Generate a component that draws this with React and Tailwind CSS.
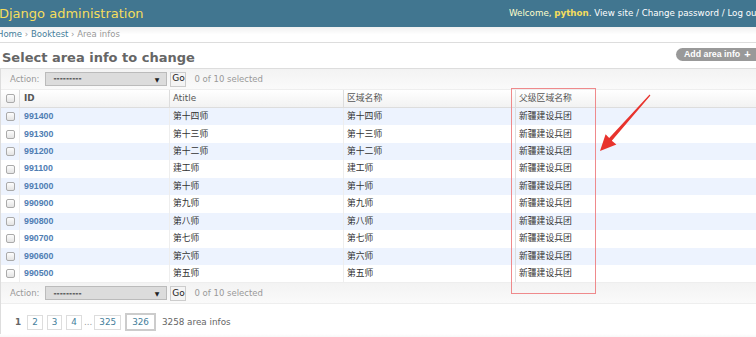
import React from 'react';

// Django admin change list for "area info", with a red highlight box and arrow on top.

const rows = [
  ['991400', '第十四师', '第十四师'],
  ['991300', '第十三师', '第十三师'],
  ['991200', '第十二师', '第十二师'],
  ['991100', '建工师', '建工师'],
  ['991000', '第十师', '第十师'],
  ['990900', '第九师', '第九师'],
  ['990800', '第八师', '第八师'],
  ['990700', '第七师', '第七师'],
  ['990600', '第六师', '第六师'],
  ['990500', '第五师', '第五师'],
];

const cjk = "font-['Liberation_Sans','Noto_Sans_CJK_SC',sans-serif]";

function Checkbox() {
  return (
    <span className="block w-[9px] h-[9px] rounded-[2px] border border-[#aaa] bg-gradient-to-b from-[#fdfdfd] to-[#e4e4e4]" />
  );
}

function ActionBar() {
  return (
    <div className="h-[21px] flex items-center bg-gradient-to-b from-[#f3f3f3] to-[#fafafa] border-b border-[#eee] text-[8.5px]">
      <span className="ml-[9px] text-[#999]">Action:</span>
      <div className="ml-[6px] w-[122px] h-[14px] flex items-center justify-between border border-[#bbb] bg-[#dcdcdc] px-[7px]">
        <span className="text-[#333] text-[7.5px] font-bold">---------</span>
        <span className="text-[#222] text-[6px]">▼</span>
      </div>
      <div className="ml-[3px] w-[16px] h-[15px] flex items-center justify-center border border-[#ccc] bg-[#f4f4f4] text-[#222] text-[9px]">Go</div>
      <span className="ml-[8px] text-[#999]">0 of 10 selected</span>
    </div>
  );
}

function PageLink({ children, current }) {
  return (
    <span
      className={
        current
          ? 'h-[18px] px-[5px] flex items-center border-2 border-[#ccc] text-[#447e9b]'
          : 'h-[15px] px-[4px] flex items-center border border-[#ddd] text-[#447e9b]'
      }
    >
      {children}
    </span>
  );
}

export default function App() {
  return (
    <div className="relative w-[756px] h-[337px] overflow-hidden bg-white font-['DejaVu_Sans',sans-serif] text-[#333]">
      {/* header */}
      <div className="h-[27px] bg-[#417690] flex items-center whitespace-nowrap">
        <h1 className="w-[510px] -ml-[1px] text-[13px] leading-none text-[#f5dd5d]">Django administration</h1>
        <div className="flex-1 overflow-hidden text-[8.7px] text-[#ffc]">
          Welcome, <b className="text-[#f5dd5d]">python</b>. <span className="text-white">View site / Change password / Log out</span>
        </div>
      </div>

      {/* breadcrumbs */}
      <div className="h-[16px] flex items-center border-b border-[#ddd] bg-gradient-to-b from-[#f0f0f0] to-white to-50% text-[8.5px] text-[#999] whitespace-nowrap">
        <span className="-ml-[3px]">
          <span className="text-[#447e9b]">Home</span> › <span className="text-[#447e9b]">Booktest</span> › Area infos
        </span>
      </div>

      {/* title row */}
      <div className="h-[25px] flex items-center justify-between pl-[2px]">
        <h1 className="text-[13px] font-bold text-[#666] leading-none mt-[3px]">Select area info to change</h1>
        <div className="h-[13px] w-[80px] mt-[-2px] flex items-center rounded-l-full bg-[#999] text-white text-[8.8px] font-bold font-['Liberation_Sans',sans-serif] pl-[8px] whitespace-nowrap">
          Add area info <span className="ml-[4px] text-[11px] leading-none">+</span>
        </div>
      </div>

      {/* change list module */}
      <div className="border-t border-l border-[#ddd]">
        <ActionBar />

        {/* table head */}
        <div className="flex h-[18px] border-b border-[#ddd] bg-gradient-to-b from-white to-[#f2f2f2] text-[8.8px] text-[#555]">
          <div className="w-[18px] flex items-center justify-center"><Checkbox /></div>
          <div className="w-[150px] border-l border-[#ddd] flex items-center pl-[4px] font-bold">ID</div>
          <div className="w-[174px] border-l border-[#ddd] flex items-center pl-[3px]">Atitle</div>
          <div className={`w-[172px] border-l border-[#ddd] flex items-center pl-[3px] ${cjk}`}>区域名称</div>
          <div className={`flex-1 border-l border-[#ddd] flex items-center pl-[3px] ${cjk}`}>父级区域名称</div>
        </div>

        {/* rows */}
        {rows.map(([id, title, name], i) => (
          <div
            key={id}
            className={`flex h-[17.45px] text-[8.8px] ${i % 2 === 0 ? 'bg-[#edf3fe]' : 'bg-white'} ${cjk}`}
          >
            <div className="w-[18px] flex items-center justify-center"><Checkbox /></div>
            <div className="w-[150px] border-l border-[#eee] flex items-center pl-[4px] text-[#4f7db3] font-bold">{id}</div>
            <div className="w-[174px] border-l border-[#eee] flex items-center pl-[3px]">{title}</div>
            <div className="w-[172px] border-l border-[#eee] flex items-center pl-[3px]">{name}</div>
            <div className="flex-1 border-l border-[#ddd] flex items-center pl-[3px]">新疆建设兵团</div>
          </div>
        ))}

        <div className="border-t border-[#eee]">
          <ActionBar />
        </div>

        {/* pagination */}
        <div className="h-[24px] mt-[6px] flex items-center gap-[4px] pl-[14px] text-[8.8px] whitespace-nowrap">
          <span className="font-bold text-[#666] mr-[2px]">1</span>
          <PageLink>2</PageLink>
          <PageLink>3</PageLink>
          <PageLink>4</PageLink>
          <span className="text-[#999] -mx-[2px]">...</span>
          <PageLink>325</PageLink>
          <PageLink current>326</PageLink>
          <span className="ml-[2px] text-[#666]">3258 area infos</span>
        </div>
      </div>
      <div className="h-[8px] bg-gradient-to-b from-white to-[#ececec]" />

      {/* highlight box */}
      <div className="absolute left-[511px] top-[88px] w-[85px] h-[206px] border-[1.5px] border-[#ef8a8c]" />

      {/* arrow */}
      <svg className="absolute inset-0" width="756" height="337" viewBox="0 0 756 337">
        <polygon
          points="650.4,95.4 611.8,140.8 616.4,144.6 600,151 605.6,134.2 609.2,138 649.6,94.6"
          fill="#e8332d"
        />
      </svg>
    </div>
  );
}
